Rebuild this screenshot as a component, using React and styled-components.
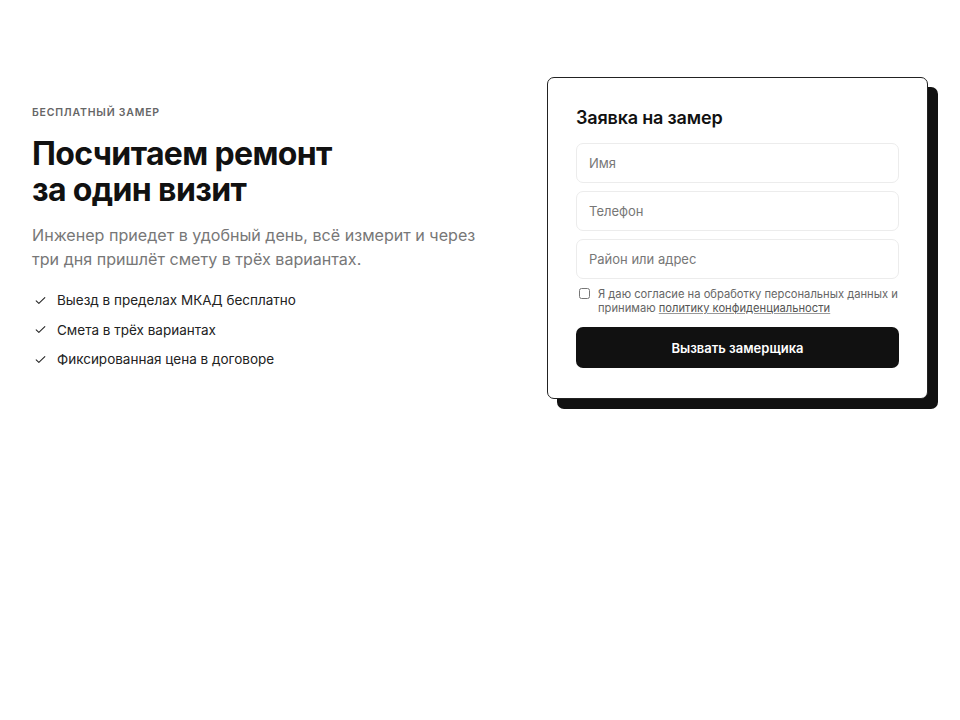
import React from "react";
import styled, { createGlobalStyle } from "styled-components";

const GlobalStyle = createGlobalStyle`
  * { box-sizing: border-box; }
  body {
    margin: 0;
    background: #fff;
    font-family: Inter, "Noto Sans", sans-serif;
    color: #111;
  }
`;

function CheckIcon() {
  return (
    <svg width="13" height="13" viewBox="0 0 24 24" fill="none" stroke="#222" strokeWidth="1.9" strokeLinecap="round" strokeLinejoin="round">
      <path d="M4 12.5l5 5L20 6.5" />
    </svg>
  );
}

const features = [
  "Выезд в пределах МКАД бесплатно",
  "Смета в трёх вариантах",
  "Фиксированная цена в договоре",
];

function App() {
  return (
    <>
      <GlobalStyle />
      <Section>
        <Intro>
          <Eyebrow>Бесплатный замер</Eyebrow>
          <Title>
            Посчитаем ремонт
            <br />
            за один визит
          </Title>
          <Lead>
            Инженер приедет в удобный день, всё измерит и через три дня пришлёт
            смету в трёх вариантах.
          </Lead>
          <Features>
            {features.map((f) => (
              <Feature key={f}>
                <CheckIcon />
                {f}
              </Feature>
            ))}
          </Features>
        </Intro>
        <Card>
          <CardTitle>Заявка на замер</CardTitle>
          <Fields>
            <Input placeholder="Имя" />
            <Input placeholder="Телефон" />
            <Input placeholder="Район или адрес" />
          </Fields>
          <Consent>
            <Checkbox type="checkbox" />
            <span>
              Я даю согласие на обработку персональных данных и принимаю{" "}
              <a href="#">политику конфиденциальности</a>
            </span>
          </Consent>
          <Submit type="button">Вызвать замерщика</Submit>
        </Card>
      </Section>
    </>
  );
}

const Section = styled.section`
  display: grid;
  grid-template-columns: 1fr 381px;
  gap: 47px;
  align-items: start;
  padding: 77px 32px;
`;

const Intro = styled.div`
  display: flex;
  flex-direction: column;
  padding-top: 29px;
`;

const Eyebrow = styled.div`
  font-size: 10.5px;
  font-weight: 600;
  letter-spacing: 0.075em;
  text-transform: uppercase;
  color: #666;
  line-height: 14px;
`;

const Title = styled.h1`
  margin: 16px 0 0;
  font-size: 32px;
  font-weight: 700;
  line-height: 36px;
  letter-spacing: -0.02em;
  color: #111;
`;

const Lead = styled.p`
  margin: 15px 0 0;
  font-size: 16.1px;
  line-height: 24px;
  color: #777;
`;

const Features = styled.ul`
  list-style: none;
  margin: 20px 0 0;
  padding: 0;
  display: flex;
  flex-direction: column;
  gap: 11.5px;
`;

const Feature = styled.li`
  display: flex;
  align-items: center;
  gap: 10px;
  font-size: 13.5px;
  line-height: 18px;
  color: #222;
  padding-left: 2px;
`;

const Card = styled.div`
  background: #fff;
  border: 1px solid #222;
  border-radius: 7px;
  box-shadow: 10px 10px 0 #111;
  padding: 28px 28px 30px;
  display: flex;
  flex-direction: column;
`;

const CardTitle = styled.h2`
  margin: 0 0 13px;
  font-size: 18px;
  font-weight: 600;
  line-height: 24px;
  letter-spacing: -0.01em;
  color: #111;
`;

const Fields = styled.div`
  display: flex;
  flex-direction: column;
  gap: 8px;
`;

const Input = styled.input`
  height: 40px;
  border: 1px solid #ececec;
  border-radius: 7px;
  padding: 0 12px;
  font-family: inherit;
  font-size: 13px;
  color: #111;
  outline: none;
  &::placeholder {
    color: #777;
  }
`;

const Consent = styled.label`
  display: flex;
  gap: 8px;
  align-items: flex-start;
  margin-top: 8px;
  font-size: 11.2px;
  line-height: 14px;
  color: #666;
  a {
    color: #555;
    text-decoration-color: #999;
  }
`;

const Checkbox = styled.input`
  margin: 1px 0 0 3px;
  width: 11px;
  height: 11px;
  flex: none;
`;

const Submit = styled.button`
  margin-top: 12px;
  height: 41px;
  border: none;
  border-radius: 7px;
  background: #111;
  color: #fff;
  font-family: inherit;
  font-size: 13px;
  font-weight: 600;
  cursor: pointer;
`;

export default App;
